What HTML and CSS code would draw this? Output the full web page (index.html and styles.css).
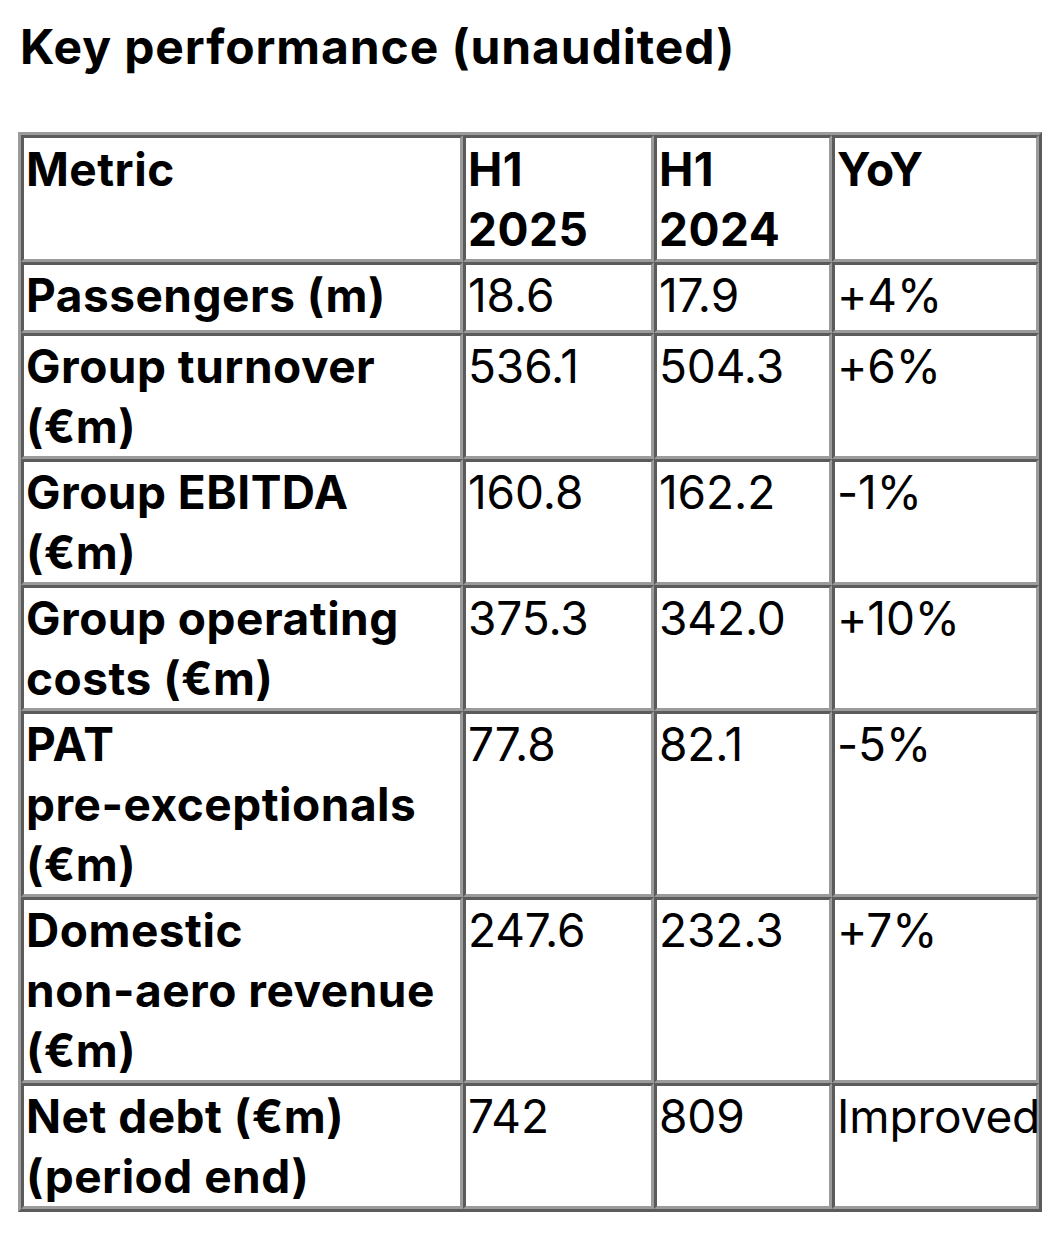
FILE: index.html
```html
<!DOCTYPE html>
<html lang="en">
<head>
<meta charset="utf-8">
<title>Key performance (unaudited)</title>
<link rel="stylesheet" href="styles.css">
</head>
<body>
<h1 class="title">Key performance (unaudited)</h1>
<table class="kpi">
  <thead>
    <tr>
      <th class="col-metric">Metric</th>
      <th class="col-h25">H1<br>2025</th>
      <th class="col-h24">H1<br>2024</th>
      <th class="col-yoy">YoY</th>
    </tr>
  </thead>
  <tbody>
    <tr class="row-single">
      <th>Passengers (m)</th>
      <td>18.6</td>
      <td>17.9</td>
      <td>+4%</td>
    </tr>
    <tr>
      <th>Group turnover<br>(€m)</th>
      <td>536.1</td>
      <td>504.3</td>
      <td>+6%</td>
    </tr>
    <tr>
      <th>Group EBITDA<br>(€m)</th>
      <td>160.8</td>
      <td>162.2</td>
      <td>-1%</td>
    </tr>
    <tr>
      <th>Group operating<br>costs (€m)</th>
      <td>375.3</td>
      <td>342.0</td>
      <td>+10%</td>
    </tr>
    <tr>
      <th>PAT<br>pre-exceptionals<br>(€m)</th>
      <td>77.8</td>
      <td>82.1</td>
      <td>-5%</td>
    </tr>
    <tr>
      <th>Domestic<br>non-aero revenue<br>(€m)</th>
      <td>247.6</td>
      <td>232.3</td>
      <td>+7%</td>
    </tr>
    <tr>
      <th>Net debt (€m)<br>(period end)</th>
      <td>742</td>
      <td>809</td>
      <td>Improved</td>
    </tr>
  </tbody>
</table>
</body>
</html>
```
FILE: styles.css
```css
html, body {
  background: #ffffff;
}

body {
  margin: 0;
  padding: 19px 21px 0 18px;
  font-family: Inter, "Noto Sans", "Liberation Sans", sans-serif;
  color: #000000;
}

.title {
  margin: 0 0 57px 2px;
  font-size: 48px;
  line-height: 56px;
  font-weight: 700;
  letter-spacing: 0.9px;
}

.kpi {
  width: 1024px;
  table-layout: fixed;
  border-collapse: separate;
  border-spacing: 0;
  border-style: solid;
  border-width: 3px;
  border-color: #9b9b9b #5b5b5b #5b5b5b #9b9b9b;
  font-size: 46px;
  line-height: 60px;
}

.kpi th,
.kpi td {
  box-sizing: border-box;
  vertical-align: top;
  text-align: left;
  padding: 0 2px;
  border-style: solid;
  border-width: 3px;
  border-color: #5b5b5b #9b9b9b #9b9b9b #5b5b5b;
}

.kpi thead th {
  padding-top: 1px;
}

.kpi th {
  font-weight: 700;
  letter-spacing: 0.5px;
}

.kpi td {
  font-weight: 400;
  letter-spacing: -0.1px;
}

.col-metric { width: 442px; }
.col-h25 { width: 191px; }
.col-h24 { width: 178px; }
.col-yoy { width: 207px; }

.row-single th,
.row-single td {
  padding-bottom: 5px;
}
```
